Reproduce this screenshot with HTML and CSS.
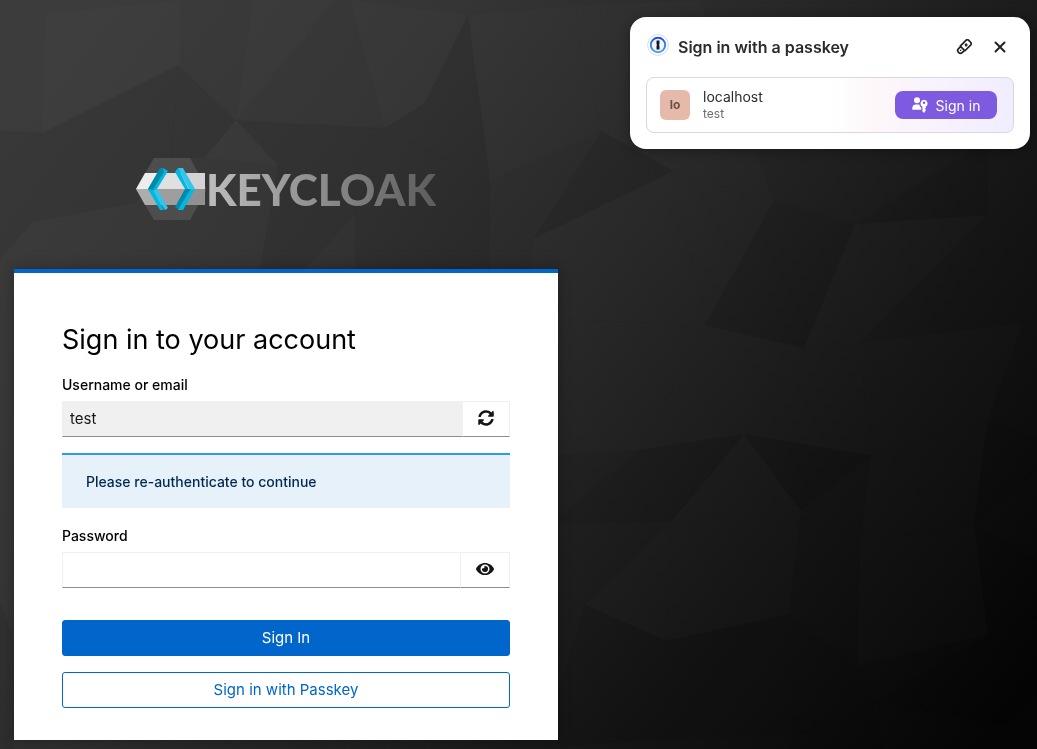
FILE: index.html
```html
<!DOCTYPE html>
<html lang="en">
<head>
<meta charset="utf-8">
<meta name="viewport" content="width=device-width, initial-scale=1">
<title>Sign in to your account</title>
<link rel="stylesheet" href="styles.css">
</head>
<body>
<svg class="backdrop" viewBox="0 0 1037 749" preserveAspectRatio="xMidYMid slice" aria-hidden="true">
  <defs>
    <linearGradient id="base" gradientUnits="userSpaceOnUse" x1="80" y1="20" x2="1000" y2="720">
      <stop offset="0" stop-color="#3c3c3c"/>
      <stop offset=".25" stop-color="#353535"/>
      <stop offset=".5" stop-color="#262626"/>
      <stop offset=".75" stop-color="#141414"/>
      <stop offset="1" stop-color="#050505"/>
    </linearGradient>
  </defs>
  <rect width="1037" height="749" fill="url(#base)"/>
  <g class="lit">
    <path d="M45 14 180 0V65L42 133Z"/>
    <path d="M236 120 335 0H253Z"/>
    <path d="M350 0 385 128 425 103 468 15Z"/>
    <path d="M278 165 236 120 205 158Z"/>
    <path d="M468 15 520 11 570 6 602 131 520 167 490 180Z"/>
    <path d="M570 6 602 131 673 171 774 201 700 0Z"/>
    <path d="M533 239 673 171 705 325 558 319 533 269Z"/>
    <path d="M673 171 774 201 705 325Z"/>
    <path d="M558 319 705 325 639 450 558 455Z"/>
    <path d="M855 224 988 215 860 343 804 348Z"/>
    <path d="M804 348 744 434 639 450 705 325Z"/>
    <path d="M744 434 804 348 860 343 871 456Z"/>
    <path d="M860 343 1023 323 988 420 871 456Z"/>
    <path d="M671 522 744 434 801 511Z"/>
    <path d="M585 605 671 522 667 641Z"/>
    <path d="M871 456 988 420 974 523 860 543Z"/>
    <path d="M860 543 974 523 988 635 857 666Z"/>
    <path d="M671 522 801 511 789 614 667 641Z"/>
  </g>
  <g class="dim">
    <path d="M0 130 42 133 33 222 0 260Z"/>
    <path d="M178 65 42 133 33 222 136 203 172 158Z"/>
    <path d="M178 65 236 120 205 158H171Z"/>
    <path d="M236 120 385 128 278 165Z"/>
    <path d="M278 165 385 128 355 215 305 269H260Z"/>
    <path d="M385 128 490 180V269H355L355 215Z"/>
    <path d="M425 103 468 15 490 180 385 128Z"/>
    <path d="M602 131 673 171 533 239Z"/>
    <path d="M774 201 855 224 804 348 705 325Z"/>
    <path d="M855 224 988 140V215Z"/>
    <path d="M744 434 871 456 801 511Z"/>
    <path d="M639 450 744 434 671 522 558 523V518Z"/>
    <path d="M988 420 1037 438V472L974 523Z"/>
    <path d="M974 523 1037 562V617L988 635Z"/>
    <path d="M789 614 857 666 873 703 795 735Z"/>
    <path d="M667 641 789 614 795 735 648 740Z"/>
    <path d="M585 605 667 641 648 740 558 747V690Z"/>
    <path d="M873 703 988 635 1037 617V690L1007 725Z"/>
    <path d="M795 735 873 703 882 749H790Z"/>
    <path d="M0 600 14 640V749H0Z"/>
  </g>
</svg>

<main class="page">
  <div class="login">
    <header class="brand" role="img" aria-label="Keycloak">
      <svg class="brand-mark" viewBox="0 0 70 62" aria-hidden="true">
        <path fill="#4d4d4d" d="M18 0H54L71 31 54 62H18L0 31Z"/>
        <path fill="#ededed" d="M9 15H30L20 31H0Z"/>
        <path fill="#adadad" d="M0 31H20L30 47H9Z"/>
        <path fill="#e0e0e0" d="M26 15H46L55 31H16Z"/>
        <path fill="#9e9e9e" d="M16 31H55L46 47H26Z"/>
        <path fill="#d4d4d4" d="M46 15H69V31H55Z"/>
        <path fill="#919191" d="M55 31H69V47H46Z"/>
        <path fill="#00b8e3" d="M27 10 32 13 21 31 15 35 12 31 24 11Z"/>
        <path fill="#008aaa" d="M24 10H27L28 14 15 35 12 31Z"/>
        <path fill="#33c6e9" d="M21 31 32 50 29 52 17 34Z"/>
        <path fill="#00b8e3" d="M12 31 17 32 28 52H24Z"/>
        <path fill="#33c6e9" d="M42 10H47L59 31 54 33Z"/>
        <path fill="#00b8e3" d="M42 10 39 14 49 31 53 32Z"/>
        <path fill="#008aaa" d="M49 31H55L43 52 39 49Z"/>
        <path fill="#00b8e3" d="M54 32 59 31 47 52H42Z"/>
      </svg>
      <span class="brand-name">KEYCLOAK</span>
    </header>

    <section class="card">
      <h1 class="title">Sign in to your account</h1>
      <form class="form">
        <label class="label" for="username">Username or email</label>
        <div class="group">
          <input class="input input-readonly" id="username" type="text" value="test" readonly>
          <button class="addon" type="button" aria-label="Restart login">
            <svg class="icon" viewBox="0 0 512 512"><path d="M370.7 133.300C339.500 104 298.900 88 255.800 88c-77.500.1-144.300 53.200-162.800 126.900-1.300 5.400-6.100 9.100-11.700 9.100H24.100c-7.500 0-13.200-6.800-11.800-14.200C33.900 94.900 134.800 8 256 8c66.400 0 126.800 26.100 171.300 68.700L463 41c15.100-15.100 41-4.400 41 17v134c0 13.300-10.700 24-24 24H346c-21.400 0-32.100-25.900-17-41l41.700-41.700zM32 296h134c21.400 0 32.100 25.900 17 41l-41.800 41.800c31.300 29.300 71.800 45.300 114.900 45.300 77.400-.1 144.300-53.100 162.800-126.800 1.300-5.400 6.100-9.100 11.700-9.100h57.300c7.500 0 13.200 6.800 11.800 14.200C478.100 417.100 377.200 504 256 504c-66.400 0-126.800-26.100-171.300-68.700L49 471c-15.100 15.100-41 4.400-41-17V320c0-13.300 10.700-24 24-24z"/></svg>
          </button>
        </div>

        <p class="alert" role="status">Please re-authenticate to continue</p>

        <label class="label" for="password">Password</label>
        <div class="group">
          <input class="input" id="password" type="password">
          <button class="addon addon-wide" type="button" aria-label="Show password">
            <svg class="icon icon-eye" viewBox="0 0 576 512"><path d="M572.500 241.400C518.300 135.600 410.900 64 288 64S57.700 135.600 3.500 241.400a32.400 32.400 0 0 0 0 29.200C57.700 376.400 165.100 448 288 448s230.300-71.600 284.500-177.400a32.400 32.400 0 0 0 0-29.200zM288 400a144 144 0 1 1 144-144 143.900 143.900 0 0 1-144 144zm0-240a95.300 95.300 0 0 0-25.300 3.800 47.900 47.900 0 0 1-66.900 66.900A95.800 95.800 0 1 0 288 160z"/></svg>
          </button>
        </div>

        <button class="button button-primary" type="submit">Sign In</button>
        <button class="button button-secondary" type="button">Sign in with Passkey</button>
      </form>
    </section>
  </div>
</main>

<aside class="passkey" aria-label="Sign in with a passkey">
  <header class="passkey-head">
    <svg class="passkey-logo" viewBox="0 0 22 22" aria-hidden="true">
      <defs><linearGradient id="ring" x1="0" y1="0" x2="0" y2="1"><stop offset="0" stop-color="#1a4ff0"/><stop offset="1" stop-color="#4aa3f5"/></linearGradient></defs>
      <circle cx="11" cy="11" r="10.400" fill="#fff" stroke="#cdd0d8" stroke-width=".8"/>
      <circle cx="11" cy="11" r="7.200" fill="#f4f6fc" stroke="url(#ring)" stroke-width="1.900"/>
      <path fill="#16182e" d="M9.500 6.500H12.500V10L12 11 12.500 12V15.500H9.500V12L10 11 9.500 10Z"/>
    </svg>
    <h2 class="passkey-title">Sign in with a passkey</h2>
    <button class="icon-button" type="button" aria-label="Use a security key">
      <svg viewBox="0 0 16 16" fill="none" stroke="#222" stroke-width="1.700" stroke-linejoin="round" aria-hidden="true">
        <g transform="rotate(45 8 8)"><path d="M4.700 10V2Q4.700 0 6.700 0H9.300Q11.300 0 11.300 2V10ZM5.300 10V13A2.700 2.700 0 0 0 10.700 13V10"/><circle cx="8" cy="5" r=".6" fill="#222"/><path d="M7.500 12.700h1"/></g>
      </svg>
    </button>
    <button class="icon-button" type="button" aria-label="Close">
      <svg viewBox="0 0 16 16" fill="none" stroke="#222" stroke-width="2" stroke-linecap="round" aria-hidden="true"><path d="M3.500 3.500 12.500 12.500M12.500 3.500 3.500 12.500"/></svg>
    </button>
  </header>
  <div class="account">
    <span class="avatar" aria-hidden="true">lo</span>
    <div class="account-text">
      <span class="account-site">localhost</span>
      <span class="account-user">test</span>
    </div>
    <button class="passkey-button" type="button">
      <svg viewBox="0 0 16 16" fill="#fff" aria-hidden="true">
        <circle cx="5" cy="3.200" r="3"/>
        <path d="M.3 12.800V11.500Q.3 7.600 4 7.600H7.300Q7.600 9.600 9.200 10.800V12.800Z"/>
        <path fill-rule="evenodd" d="M12 2.800A3.700 3.700 0 0 1 13.700 9.700L14 10.800 13 11.700 14 13 12 16 10.400 14.300V9.700A3.700 3.700 0 0 1 12 2.800ZM12 4.600A1.200 1.200 0 1 0 12 7 1.200 1.200 0 1 0 12 4.600Z"/>
      </svg>
      Sign in
    </button>
  </div>
</aside>
</body>
</html>
```

FILE: styles.css
```css
*, *::before, *::after { box-sizing: border-box; }

body {
  margin: 0;
  min-height: 100vh;
  background: #1c1c1c;
  color: #151515;
  font-family: Inter, "Liberation Sans", sans-serif;
  font-size: 15px;
}

h1, h2, p { margin: 0; }

button, input { font: inherit; color: inherit; }
button { cursor: pointer; }

.backdrop {
  position: fixed;
  inset: 0;
  z-index: -1;
  width: 100%;
  height: 100%;
}
.lit { fill: #fff; fill-opacity: .012; }
.dim { fill: #000; fill-opacity: .06; }

.page {
  display: grid;
  grid-template-columns: minmax(0, 544px) 1fr;
  padding: 158px 14px 9px;
}

.brand {
  display: flex;
  align-items: center;
  justify-content: center;
  height: 62px;
  margin-bottom: 49px;
}
.brand-mark { width: 70px; height: 62px; }
.brand-name {
  font-family: Lato, sans-serif;
  font-size: 44px;
  font-weight: 900;
  line-height: 62px;
  color: transparent;
  background: linear-gradient(90deg, #bdbdbd, #5c5c5c);
  background-clip: text;
  -webkit-background-clip: text;
}

.card {
  padding: 48px 48px 32px;
  background: #fff;
  border-top: 4px solid #06c;
  box-shadow: 0 0 12px rgba(0, 0, 0, .3);
}
.title {
  margin-bottom: 14px;
  color: #000;
  font-size: 27px;
  font-weight: 400;
  line-height: 38px;
}

.form { display: flex; flex-direction: column; }
.label {
  margin-bottom: 4px;
  color: #000;
  font-size: 14px;
  font-weight: 500;
  line-height: 24px;
}
.group { display: flex; height: 36px; }
.input {
  flex: 1;
  min-width: 0;
  padding: 0 8px;
  border: 1px solid #f0f0f0;
  border-bottom-color: #8a8d90;
  border-radius: 0;
  background: #fff;
}
.input-readonly { padding: 0 7px 1px; background: #f0f0f0; }
.addon {
  display: flex;
  align-items: center;
  justify-content: center;
  width: 47px;
  padding: 0 0 2px;
  border: 1px solid #f0f0f0;
  border-left: 0;
  border-bottom-color: #8a8d90;
  background: #fff;
}
.addon-wide { width: 49px; }
.icon { width: 16px; height: 16px; fill: #151515; }
.icon-eye { width: 18px; }

.alert {
  margin: 16px 0;
  padding: 16px 24px;
  border-top: 2px solid #2b9af3;
  background: #e7f1fa;
  color: #002952;
  font-size: 14px;
  font-weight: 500;
  line-height: 21px;
}

.button {
  height: 36px;
  padding: 0 16px 2px;
  border: 1px solid #06c;
  border-radius: 3px;
}
.button-primary { margin: 32px 0 16px; background: #06c; color: #fff; }
.button-secondary { background: #fff; color: #06c; }

.passkey {
  position: absolute;
  top: 17px;
  right: 7px;
  width: 400px;
  max-width: calc(100% - 14px);
  padding: 16px;
  border-radius: 16px;
  background: #fff;
  box-shadow: 0 2px 12px rgba(0, 0, 0, .3);
  color: #2b2b2e;
}
.passkey-head {
  display: flex;
  align-items: center;
  gap: 8px;
  height: 28px;
  margin-bottom: 16px;
}
.passkey-logo { width: 24px; height: 22px; margin-bottom: 4px; }
.passkey-title { flex: 1; font-size: 16px; font-weight: 600; line-height: 24px; }
.icon-button {
  display: flex;
  align-items: center;
  justify-content: center;
  width: 28px;
  height: 28px;
  padding: 0;
  border: 0;
  background: none;
}
.icon-button svg { width: 16px; height: 16px; }

.account {
  display: flex;
  align-items: center;
  gap: 13px;
  height: 56px;
  padding: 0 16px 0 13px;
  border: 1px solid #d9d7e3;
  border-radius: 8px;
  background: linear-gradient(90deg, #fff 50%, #fef7fa 62%, #f0edff);
}
.avatar {
  width: 30px;
  height: 30px;
  border-radius: 6px;
  background: #e5baab;
  color: #6b5049;
  font-size: 12px;
  font-weight: 700;
  line-height: 30px;
  text-align: center;
}
.account-text { display: flex; flex: 1; flex-direction: column; padding-bottom: 2px; }
.account-site { font-size: 14px; line-height: 18px; }
.account-user { color: #6d6d70; font-size: 12px; line-height: 15px; }
.passkey-button {
  display: flex;
  align-items: center;
  justify-content: center;
  gap: 8px;
  width: 102px;
  height: 28px;
  padding: 0;
  border: 0;
  border-radius: 8px;
  background: #7d5ae0;
  color: #fff;
  font-size: 14px;
}
.passkey-button svg { width: 16px; height: 16px; }
```
